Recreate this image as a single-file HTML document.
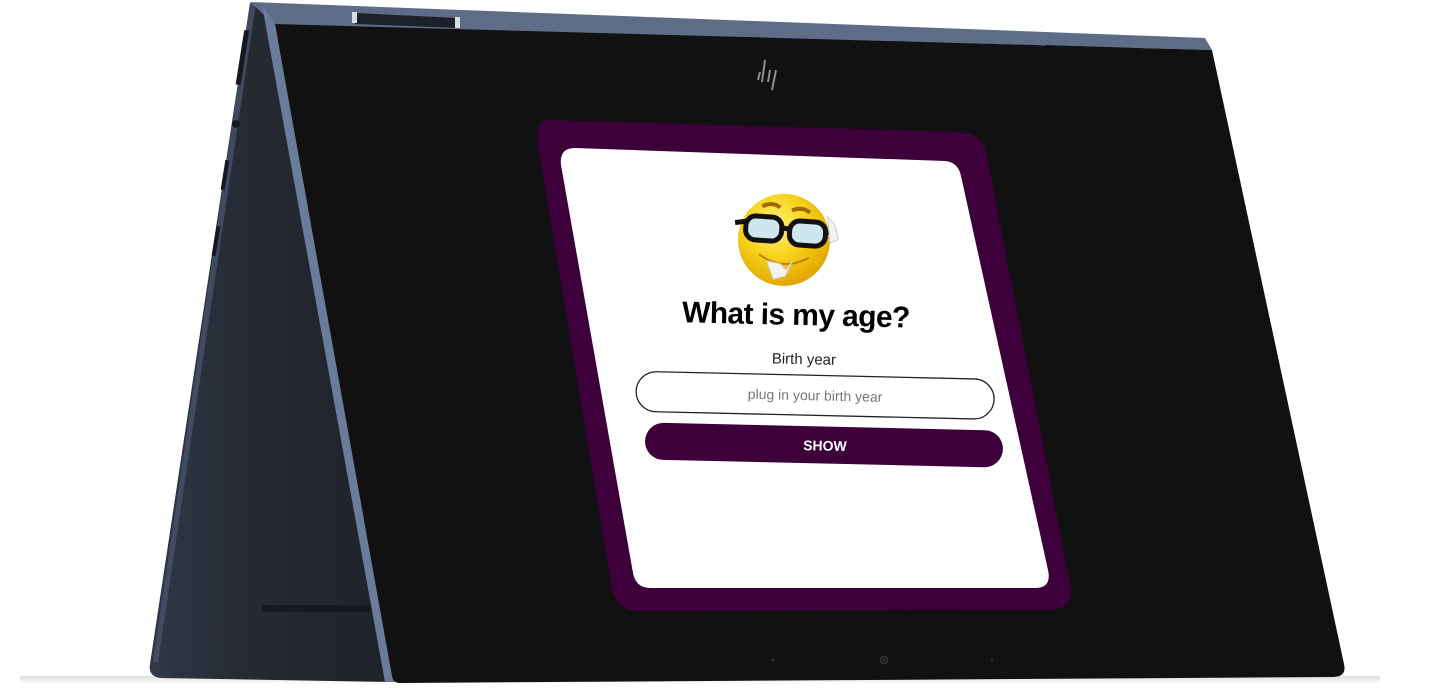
<!DOCTYPE html>
<html><head><meta charset="utf-8"><style>
html,body{margin:0;padding:0;background:#fff;width:1455px;height:694px;overflow:hidden}
svg{display:block}
</style></head><body>
<svg width="1455" height="694" viewBox="0 0 1455 694" xmlns="http://www.w3.org/2000/svg">
<defs>
<linearGradient id="back" x1="0" y1="0" x2="1" y2="0">
<stop offset="0" stop-color="#303846"/><stop offset="0.4" stop-color="#252a33"/><stop offset="1" stop-color="#1e222a"/>
</linearGradient>
<radialGradient id="emo" cx="0.4" cy="0.35" r="0.7">
<stop offset="0" stop-color="#fff27a"/><stop offset="0.5" stop-color="#f7d21a"/><stop offset="1" stop-color="#e0a000"/>
</radialGradient>
<linearGradient id="floor" x1="0" y1="0" x2="0" y2="1">
<stop offset="0" stop-color="#c8c8c8"/><stop offset="1" stop-color="#fff"/>
</linearGradient>
</defs>
<rect x="20" y="676" width="1360" height="8" fill="url(#floor)" opacity="0.6"/>
<path d="M250,3 L268,3 L392,682 L160,678 Q148,676 150,664 Z" fill="url(#back)"/>
<path d="M250,3 L256,3 L158,662 L153,662 Z" fill="#46526a" opacity="0.8"/>
<rect x="240" y="30" width="5" height="55" fill="#151820" transform="rotate(9 242 57)"/>
<circle cx="236" cy="124" r="4" fill="#151820"/>
<rect x="223" y="160" width="4" height="30" fill="#151820" transform="rotate(9 225 175)"/>
<rect x="214" y="226" width="4" height="30" fill="#151820" transform="rotate(9 216 241)"/>
<rect x="262" y="605" width="110" height="7" rx="3.5" fill="#16191f"/>
<path d="M250,2 L1205,38 L1212,50 L275,25 Z" fill="#5d6d88"/>
<path d="M355,13 L458,18 L458,28 L355,24 Z" fill="#1b2029"/>
<path d="M1043,45 L1136,48 L1136,58 L1043,55 Z" fill="#1b2029"/>
<rect x="352" y="12" width="5" height="11" fill="#d8dde3"/>
<rect x="455" y="17" width="5" height="11" fill="#d8dde3"/>
<rect x="1040" y="45" width="5" height="10" fill="#d8dde3"/>
<rect x="1132" y="48" width="5" height="10" fill="#d8dde3"/>
<path d="M262,5 L275,24 L396,682 L385,682 Z" fill="#6a7c99"/>
<path d="M275,24 L1212,50 L1344,664 Q1347,677 1333,677 L400,683 Q393,683 392,676 Z" fill="#111"/>
<g stroke="#8a8f96" stroke-width="2" fill="none">
<line x1="760" y1="72" x2="758" y2="80"/><line x1="765" y1="60" x2="762" y2="82"/><line x1="770" y1="70" x2="768" y2="82"/><line x1="776" y1="70" x2="772" y2="90"/>
</g>
<circle cx="884" cy="660" r="4" fill="#222" stroke="#333"/>
<circle cx="773" cy="660" r="1.5" fill="#333"/><circle cx="992" cy="660" r="1.5" fill="#333"/>
<path d="M548,120 L962,132 Q982,133 986,152 L1070,584 Q1074,610 1050,610 L638,611 Q617,611 612,590 L538,145 Q535,120 548,120 Z" fill="#3d003b"/>
<path d="M575,148 L945,161 Q958,162 961,176 L1048,570 Q1052,588 1035,588 L650,588 Q636,588 633,573 L561,165 Q559,148 575,148 Z" fill="#fff"/>
<g transform="rotate(4 785 240)">
<circle cx="784" cy="240" r="46" fill="url(#emo)"/>
<path d="M760,208 q10,-6 18,0" stroke="#a06a00" stroke-width="4" fill="none"/>
<path d="M790,210 q10,-5 18,1" stroke="#a06a00" stroke-width="4" fill="none"/>
<rect x="745" y="218" width="36" height="24" rx="10" fill="#cfe6ee" stroke="#111" stroke-width="5"/>
<rect x="789" y="220" width="36" height="24" rx="10" fill="#cfe6ee" stroke="#111" stroke-width="5"/>
<path d="M734,226 L745,224 M781,228 L789,229 M825,230 L836,228" stroke="#111" stroke-width="5"/>
<path d="M760,256 q25,16 50,0" stroke="#c08000" stroke-width="2" fill="none"/>
<path d="M768,262 l8,18 l12,-4 l6,-16 l-6,10 l-6,-6 z" fill="#f3f3f3" stroke="#ccc"/>
<path d="M826,214 l8,8 l4,14 l-8,4 z" fill="#f3f3f3" stroke="#ccc"/>
</g>
<g transform="rotate(1.3 800 400)" font-family="Liberation Sans, sans-serif">
<text x="794" y="325" font-size="30" font-weight="bold" text-anchor="middle" fill="#000" letter-spacing="-0.6">What is my age?</text>
<text x="803" y="364" font-size="15" text-anchor="middle" fill="#222">Birth year</text>
<rect x="636" y="375" width="358" height="40" rx="20" fill="#fff" stroke="#222" stroke-width="1.3"/>
<text x="815" y="400" font-size="14" text-anchor="middle" fill="#777">plug in your birth year</text>
<rect x="646" y="426" width="358" height="37" rx="18.5" fill="#3d003b"/>
<text x="826" y="450" font-size="14" font-weight="bold" text-anchor="middle" fill="#fff">SHOW</text>
</g>
</svg>
</body></html>
